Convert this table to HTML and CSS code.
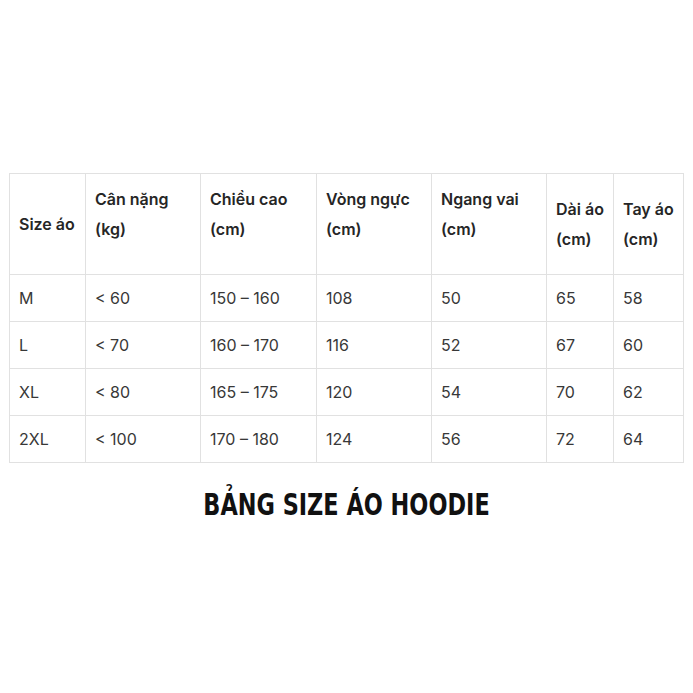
FILE: index.html
```html
<!DOCTYPE html>
<html lang="vi">
<head>
<meta charset="utf-8">
<title>Bảng size áo hoodie</title>
<link rel="stylesheet" href="styles.css">
</head>
<body>
<main class="page">
  <table class="size-table">
    <colgroup>
      <col class="c1"><col class="c2"><col class="c3"><col class="c4"><col class="c5"><col class="c6"><col class="c7">
    </colgroup>
    <thead>
      <tr>
        <th>Size áo</th>
        <th class="tall">Cân nặng<br>(kg)</th>
        <th class="tall">Chiều cao<br>(cm)</th>
        <th class="tall">Vòng ngực<br>(cm)</th>
        <th class="tall">Ngang vai<br>(cm)</th>
        <th>Dài áo<br>(cm)</th>
        <th>Tay áo<br>(cm)</th>
      </tr>
    </thead>
    <tbody>
      <tr><td>M</td><td>&lt; 60</td><td>150 – 160</td><td>108</td><td>50</td><td>65</td><td>58</td></tr>
      <tr><td>L</td><td>&lt; 70</td><td>160 – 170</td><td>116</td><td>52</td><td>67</td><td>60</td></tr>
      <tr><td>XL</td><td>&lt; 80</td><td>165 – 175</td><td>120</td><td>54</td><td>70</td><td>62</td></tr>
      <tr><td>2XL</td><td>&lt; 100</td><td>170 – 180</td><td>124</td><td>56</td><td>72</td><td>64</td></tr>
    </tbody>
  </table>
  <h1 class="title">BẢNG SIZE ÁO HOODIE</h1>
</main>
</body>
</html>
```

FILE: styles.css
```css
html, body {
  margin: 0;
  padding: 0;
  background: #ffffff;
}

.page {
  padding: 173px 0 0 9px;
  font-family: Inter, "Noto Sans", sans-serif;
  color: #333333;
}

.size-table {
  border-collapse: collapse;
  table-layout: fixed;
  width: 675px;
  font-size: 16px;
}

.c1 { width: 76px; }
.c2 { width: 115px; }
.c3 { width: 116px; }
.c4 { width: 115px; }
.c5 { width: 115px; }
.c6 { width: 67px; }
.c7 { width: 70px; }

.size-table th,
.size-table td {
  border: 1px solid #e1e1e1;
  padding: 0 9px;
  text-align: left;
  vertical-align: middle;
}

.size-table thead tr {
  height: 101px;
}

.size-table th {
  font-weight: 600;
  line-height: 30px;
  color: #262626;
}

.size-table th.tall {
  padding-bottom: 21px;
}

.size-table tbody tr {
  height: 47px;
}

.size-table td {
  font-weight: 400;
  line-height: 20px;
  color: #383838;
}

.title {
  margin: 24px 0 0 -9px;
  text-align: center;
  font-family: "DejaVu Sans Condensed", "DejaVu Sans", sans-serif;
  font-stretch: condensed;
  font-weight: 700;
  font-size: 30px;
  line-height: 36px;
  color: #111111;
  transform: scaleX(0.83);
}
```
